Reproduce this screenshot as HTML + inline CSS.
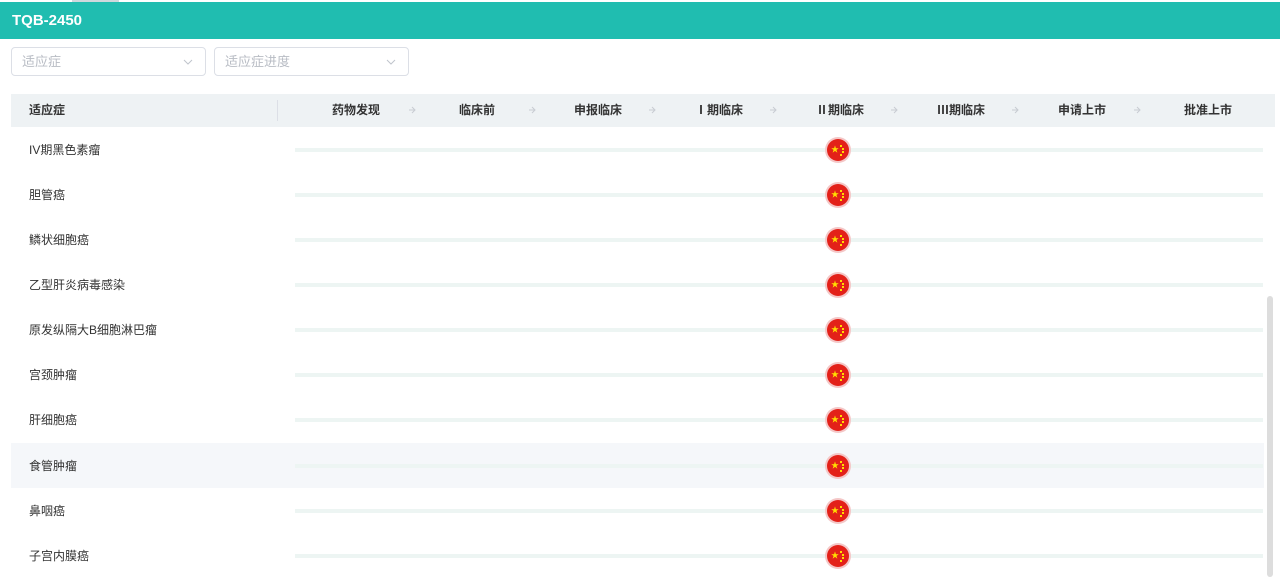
<!DOCTYPE html>
<html><head><meta charset="utf-8"><style>
*{margin:0;padding:0;box-sizing:border-box}
body{width:1280px;height:577px;overflow:hidden;background:#fff;font-family:"Liberation Sans","Noto Sans CJK SC",sans-serif;position:relative}
.tab{position:absolute;left:72px;top:0;width:47px;height:2px;background:#cfd8dc}
.bar{position:absolute;left:0;top:2px;width:1280px;height:37px;background:#20bdb0;color:#fff;font-weight:bold;font-size:15px;line-height:37px;padding-left:12px}
.sel{position:absolute;top:47px;height:29px;border:1px solid #dcdfe6;border-radius:4px;font-size:13px;color:#b8bcc4;line-height:27px;padding-left:10px}
.sel svg{position:absolute;right:12px;top:11px}
.th{position:absolute;left:11px;top:94px;width:1264px;height:33px;background:#eef2f4;font-size:12px;font-weight:bold;color:#333}
.th span{position:absolute;top:0;line-height:33px;transform:translateX(-50%);white-space:nowrap}
.th .ar{top:12px;line-height:10px;color:#c0c4cc}
.div{position:absolute;left:266px;top:6px;width:1px;height:21px;background:#dcdfe6}
.row{position:absolute;left:11px;width:1253px;height:45px;font-size:12px;color:#333}
.row .n{position:absolute;left:18px;top:1px;line-height:45px}
.row .t{position:absolute;left:284px;top:21px;width:968px;height:4px;background:#edf5f3}
.flag{position:absolute;left:814px;top:10px;width:26px;height:26px;border-radius:50%;background:#f4c7c7;padding:2px}
.flag div{width:22px;height:22px;border-radius:50%;background:#e32119;position:relative}
.flag div::before{content:"★";position:absolute;left:4px;top:7px;font-size:8px;color:#ffde00;line-height:8px}
.flag div::after{content:"";position:absolute;left:13px;top:6px;width:2px;height:2px;background:#ffde00;box-shadow:2px 3px 0 #ffde00,2px 6px 0 #ffde00,0 9px 0 #ffde00}
.sb{position:absolute;left:1267px;top:296px;width:6px;height:281px;background:#ddd;border-radius:3px}
</style></head><body>
<div class="tab"></div>
<div class="bar">TQB-2450</div>
<div class="sel" style="left:11px;width:195px">适应症<svg width="10" height="6" viewBox="0 0 10 6"><path d="M1 1l4 4 4-4" stroke="#c0c4cc" fill="none"/></svg></div>
<div class="sel" style="left:214px;width:195px">适应症进度<svg width="10" height="6" viewBox="0 0 10 6"><path d="M1 1l4 4 4-4" stroke="#c0c4cc" fill="none"/></svg></div>
<div class="th">
<span style="transform:none;left:18px">适应症</span>
<div class="div"></div>
<span style="left:345px">药物发现</span><svg class="ar" style="position:absolute;left:397px;top:12px" width="8" height="8" viewBox="0 0 8 8"><path d="M1 4h6M4 1l3 3-3 3" stroke="#c8ccd2" fill="none"/></svg>
<span style="left:466px">临床前</span><svg style="position:absolute;left:517px;top:12px" width="8" height="8" viewBox="0 0 8 8"><path d="M1 4h6M4 1l3 3-3 3" stroke="#c8ccd2" fill="none"/></svg>
<span style="left:587px">申报临床</span><svg style="position:absolute;left:637px;top:12px" width="8" height="8" viewBox="0 0 8 8"><path d="M1 4h6M4 1l3 3-3 3" stroke="#c8ccd2" fill="none"/></svg>
<span style="left:708px">Ⅰ期临床</span><svg style="position:absolute;left:758px;top:12px" width="8" height="8" viewBox="0 0 8 8"><path d="M1 4h6M4 1l3 3-3 3" stroke="#c8ccd2" fill="none"/></svg>
<span style="left:829px">Ⅱ期临床</span><svg style="position:absolute;left:879px;top:12px" width="8" height="8" viewBox="0 0 8 8"><path d="M1 4h6M4 1l3 3-3 3" stroke="#c8ccd2" fill="none"/></svg>
<span style="left:950px">Ⅲ期临床</span><svg style="position:absolute;left:1000px;top:12px" width="8" height="8" viewBox="0 0 8 8"><path d="M1 4h6M4 1l3 3-3 3" stroke="#c8ccd2" fill="none"/></svg>
<span style="left:1071px">申请上市</span><svg style="position:absolute;left:1122px;top:12px" width="8" height="8" viewBox="0 0 8 8"><path d="M1 4h6M4 1l3 3-3 3" stroke="#c8ccd2" fill="none"/></svg>
<span style="left:1197px">批准上市</span>
</div>
<div class="row" style="top:127px"><span class="n">IV期黑色素瘤</span><div class="t"></div><div class="flag"><div></div></div></div>
<div class="row" style="top:172px"><span class="n">胆管癌</span><div class="t"></div><div class="flag"><div></div></div></div>
<div class="row" style="top:217px"><span class="n">鳞状细胞癌</span><div class="t"></div><div class="flag"><div></div></div></div>
<div class="row" style="top:262px"><span class="n">乙型肝炎病毒感染</span><div class="t"></div><div class="flag"><div></div></div></div>
<div class="row" style="top:307px"><span class="n">原发纵隔大B细胞淋巴瘤</span><div class="t"></div><div class="flag"><div></div></div></div>
<div class="row" style="top:352px"><span class="n">宫颈肿瘤</span><div class="t"></div><div class="flag"><div></div></div></div>
<div class="row" style="top:397px"><span class="n">肝细胞癌</span><div class="t"></div><div class="flag"><div></div></div></div>
<div class="row" style="top:443px;background:#f5f7fa"><span class="n">食管肿瘤</span><div class="t"></div><div class="flag"><div></div></div></div>
<div class="row" style="top:488px"><span class="n">鼻咽癌</span><div class="t"></div><div class="flag"><div></div></div></div>
<div class="row" style="top:533px"><span class="n">子宫内膜癌</span><div class="t"></div><div class="flag"><div></div></div></div>
<div class="sb"></div>
</body></html>
